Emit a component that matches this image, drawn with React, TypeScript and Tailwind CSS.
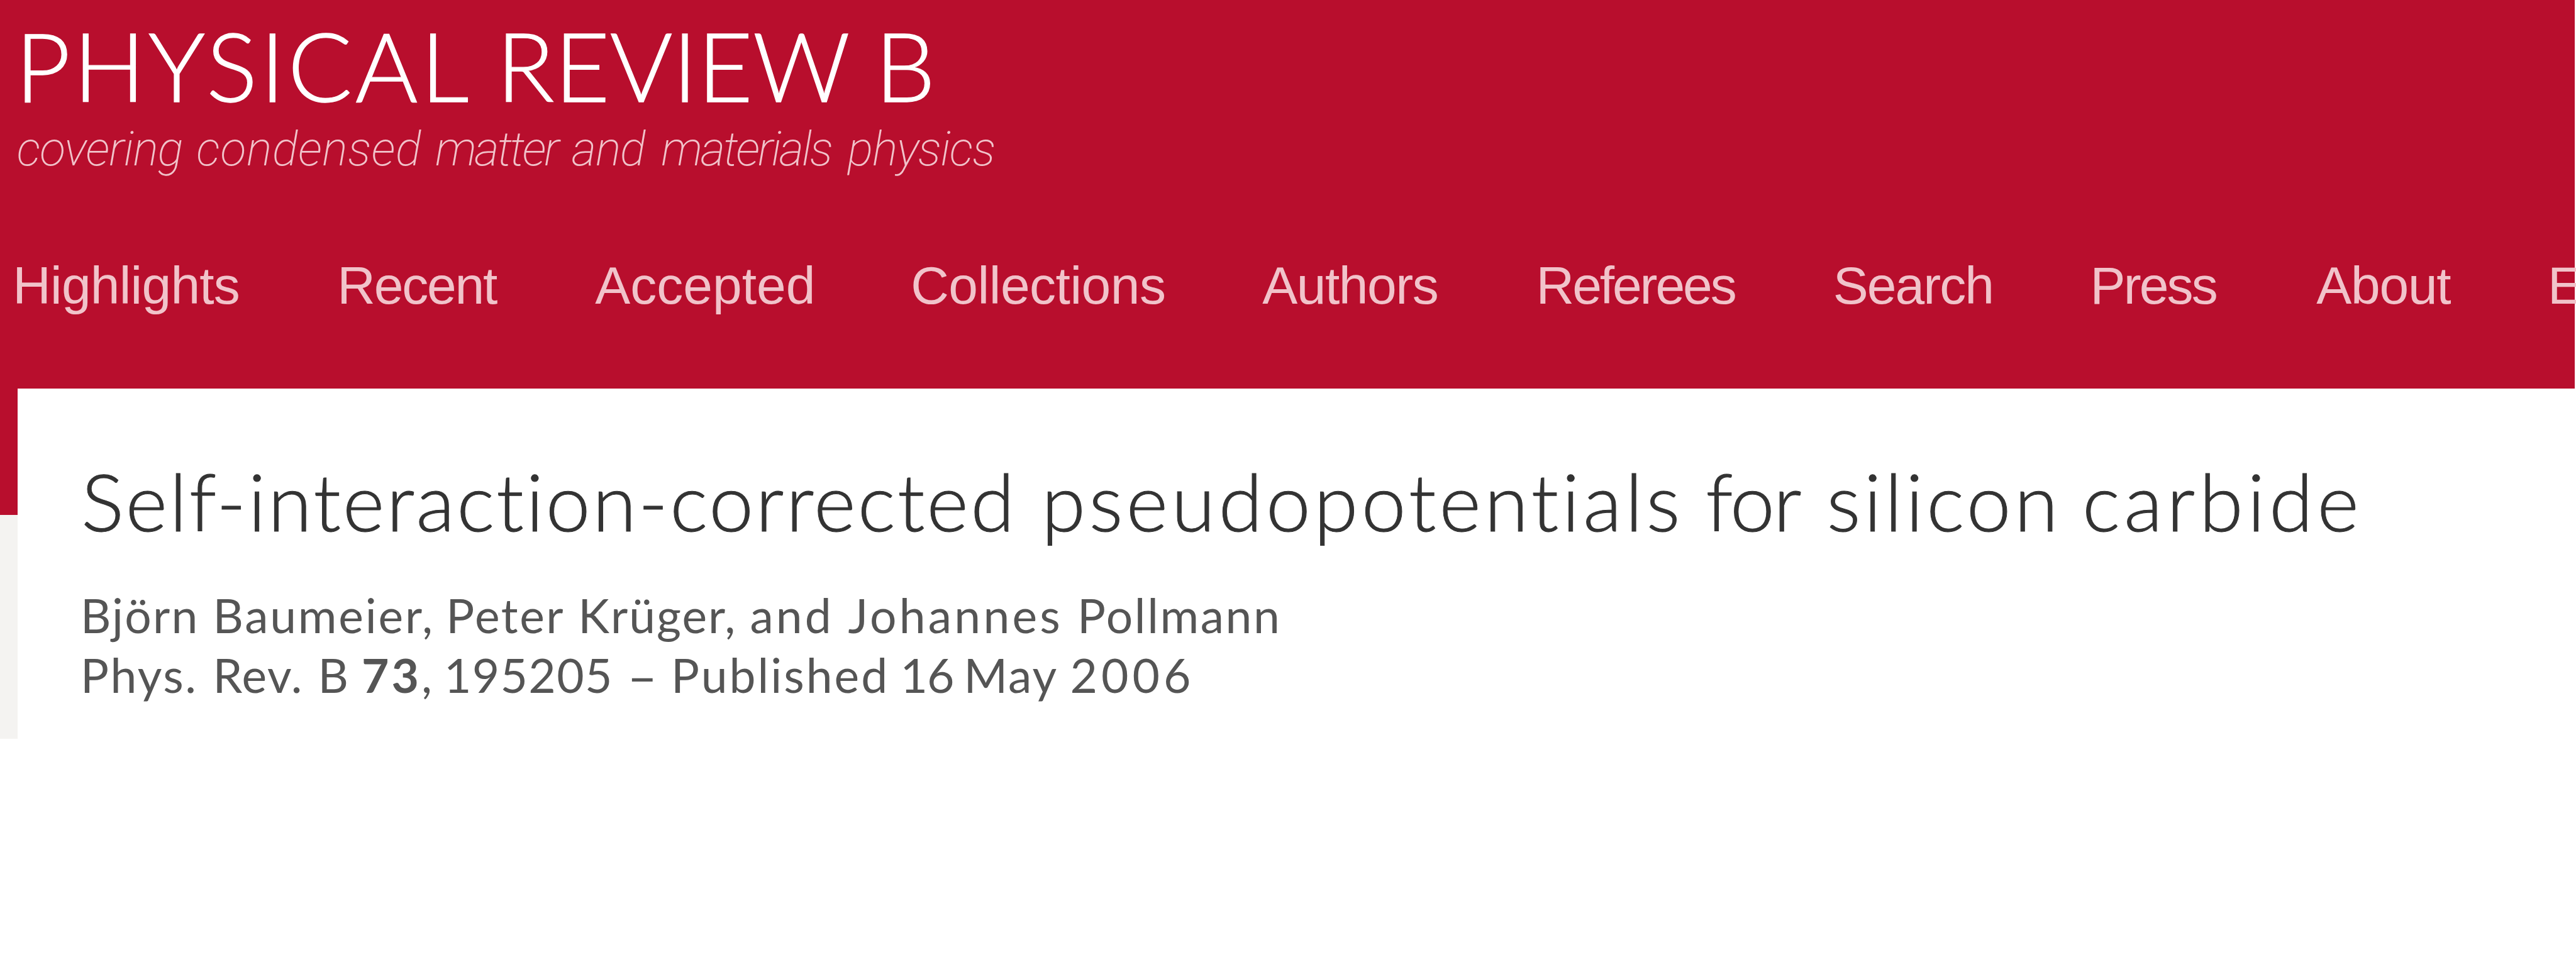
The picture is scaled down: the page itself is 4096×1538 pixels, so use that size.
type Word = {
  text: string;
  className: string;
};

const journalName: Word[] = [
  { text: "PHYSICAL", className: "w-[765px] tracking-[4.4px]" },
  { text: "REVIEW", className: "w-[602px]" },
  { text: "B", className: "w-[120px]" },
];

const tagline: Word[] = [
  { text: "covering", className: "w-[285.6px] tracking-[-1px]" },
  { text: "condensed", className: "w-[379.8px] tracking-[0.6px]" },
  { text: "matter", className: "w-[217px] tracking-[-3.3px]" },
  { text: "and", className: "w-[142.2px] tracking-[-1.3px]" },
  { text: "materials", className: "w-[296.4px] tracking-[-3.1px]" },
  { text: "physics", className: "w-[300px] tracking-[-1.3px]" },
];

const navItems: Word[] = [
  { text: "Highlights", className: "w-[516px] tracking-[-0.8px]" },
  { text: "Recent", className: "w-[410px] tracking-[-2.2px]" },
  { text: "Accepted", className: "w-[502px]" },
  { text: "Collections", className: "w-[559px] tracking-[-0.5px]" },
  { text: "Authors", className: "w-[435.4px] tracking-[-1.5px]" },
  { text: "Referees", className: "w-[472.2px] tracking-[-3.1px]" },
  { text: "Search", className: "w-[408.8px] tracking-[-2px]" },
  { text: "Press", className: "w-[359.8px] tracking-[-2.9px]" },
  { text: "About", className: "w-[367.6px] tracking-[-1.3px]" },
  { text: "E", className: "w-[60px]" },
];

const articleTitle: Word[] = [
  { text: "Self-interaction-corrected", className: "w-[1526.8px] tracking-[3.3px]" },
  { text: "pseudopotentials", className: "w-[1056.3px] tracking-[5.4px]" },
  { text: "for", className: "w-[192.3px] tracking-[-2px]" },
  { text: "silicon", className: "w-[406.4px] tracking-[5px]" },
  { text: "carbide", className: "w-[500px] tracking-[6.5px]" },
];

const authors: Word[] = [
  { text: "Björn", className: "w-[210.4px] tracking-[2.2px]" },
  { text: "Baumeier,", className: "w-[370.8px] tracking-[2.8px]" },
  { text: "Peter", className: "w-[210px] tracking-[2.6px]" },
  { text: "Krüger,", className: "w-[273.3px] tracking-[2px]" },
  { text: "and", className: "w-[156px] tracking-[4px]" },
  { text: "Johannes", className: "w-[364.5px] tracking-[4.2px]" },
  { text: "Pollmann", className: "w-[400px] tracking-[2.6px]" },
];

function Words({ words }: { words: Word[] }) {
  return (
    <>
      {words.map(({ text, className }) => (
        <span key={text} className={`inline-block shrink-0 whitespace-pre ${className}`}>
          {text}{" "}
        </span>
      ))}
    </>
  );
}

function JournalHeader() {
  return (
    <header className="h-[617.6px] bg-[#b80e2d] pt-[26.7px]">
      <h1 className="flex pl-[24.3px] font-[Lato,sans-serif] text-[152px] leading-[152px] font-light text-white [-webkit-text-stroke:1.3px_white]">
        <Words words={journalName} />
      </h1>
      <p className="mt-[20.3px] flex pl-[26.7px] font-[Roboto,sans-serif] text-[76px] leading-[76px] font-extralight text-[#f1c3ca] italic">
        <Words words={tagline} />
      </p>
      <nav className="mt-[129.5px] flex pl-[20.2px] font-['Liberation_Sans',Arial,sans-serif] text-[84px] leading-[100px] text-[#f1c3ca]">
        {navItems.map(({ text, className }) => (
          <a key={text} className={`shrink-0 ${className}`}>
            {text}
          </a>
        ))}
      </nav>
    </header>
  );
}

function ArticleCard() {
  return (
    <article className="flex-1 bg-white pt-[114.1px] font-[Lato,sans-serif]">
      <h2 className="flex pl-[101.3px] text-[127px] leading-[128px] font-light text-[#333333] [-webkit-text-stroke:1px_#333333]">
        <Words words={articleTitle} />
      </h2>
      <div className="mt-[71.2px] pl-[100.2px] text-[75px] leading-[95.6px] text-[#555555]">
        <p className="flex">
          <Words words={authors} />
        </p>
        <p className="flex whitespace-pre">
          <span className="w-[210.4px] tracking-[2.5px]">Phys. </span>
          <span className="w-[167.1px] tracking-[1.6px]">Rev. </span>
          <span className="w-[69.5px]">B </span>
          <span className="w-[130.9px]">
            <b className="font-bold tracking-[4px]">73</b>,{" "}
          </span>
          <span className="w-[291.6px] tracking-[1.3px]">195205 </span>
          <span className="w-[69.5px] text-[82px]">– </span>
          <span className="w-[364.5px] tracking-[3px]">Published </span>
          <span className="w-[101px] tracking-[-1px]">16 </span>
          <span className="w-[169px] tracking-[2px]">May </span>
          <span className="tracking-[6px]">2006</span>
        </p>
      </div>
    </article>
  );
}

export default function App() {
  return (
    <div className="h-[1538px] w-[4096px] overflow-hidden bg-white pr-[2px]">
      <JournalHeader />
      <div className="flex h-[557.1px]">
        <div className="w-[27.9px] shrink-0 bg-[#f4f3f1]">
          <div className="h-[201.3px] bg-[#b80e2d]" />
        </div>
        <ArticleCard />
      </div>
    </div>
  );
}
